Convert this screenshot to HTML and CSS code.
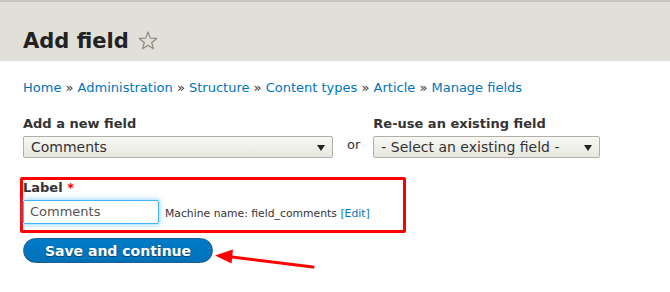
FILE: index.html
```html
<!DOCTYPE html>
<html>
<head>
<meta charset="utf-8">
<link rel="stylesheet" href="styles.css">
</head>
<body>
<header class="page-header">
  <h1 class="title">Add field <svg class="star" viewBox="0 0 20 20" width="20" height="20"><polygon points="10,1 12.29,7.14 18.84,7.43 13.71,11.51 15.47,17.82 10,14.2 4.53,17.82 6.29,11.51 1.16,7.43 7.71,7.14" fill="none" stroke="#8d8b80" stroke-width="1.2" stroke-linejoin="round"/></svg></h1>
</header>
<nav class="breadcrumb"><a>Home</a> » <a>Administration</a> » <a>Structure</a> » <a>Content types</a> » <a>Article</a> » <a>Manage fields</a></nav>
<form class="form">
  <div class="row">
    <div class="col">
      <div class="lbl">Add a new field</div>
      <div class="select sel-new"><span>Comments</span><i class="caret"></i></div>
    </div>
    <div class="or">or</div>
    <div class="col">
      <div class="lbl">Re-use an existing field</div>
      <div class="select sel-existing"><span>- Select an existing field -</span><i class="caret"></i></div>
    </div>
  </div>
  <div class="label-field">
    <div class="lbl lbl-tight">Label <span class="req">*</span></div>
    <div class="input-row">
      <div class="input">Comments</div>
      <span class="machine">Machine name: field_comments <span class="edit">[Edit]</span></span>
    </div>
  </div>
  <button type="button" class="btn">Save and continue</button>
</form>
<svg class="annot-arrow" width="670" height="292" viewBox="0 0 670 292">
  <line x1="313" y1="267" x2="228" y2="256.5" stroke="#f00" stroke-width="3" stroke-linecap="round"/>
  <polygon points="215,255.5 233,249.5 231.5,263.5" fill="#f00"/>
</svg>
</body>
</html>
```
FILE: styles.css
```css
html, body {
  margin: 0;
  padding: 0;
  background: #fff;
}
body {
  font-family: "DejaVu Sans", Verdana, sans-serif;
  color: #333;
  width: 670px;
  height: 292px;
  overflow: hidden;
  position: relative;
}
.page-header {
  background: #e0e0d8;
  border-top: 2px solid #c6c5be;
  height: 59px;
  padding-left: 23px;
  box-sizing: content-box;
}
.title {
  margin: 0;
  padding-top: 26px;
  font-size: 21px;
  line-height: 26px;
  font-weight: bold;
  color: #222;
  display: flex;
  align-items: center;
  gap: 9px;
}
.star {
  display: block;
  margin-top: -1px;
}
.breadcrumb {
  margin: 18px 0 0 23px;
  font-size: 13px;
  line-height: 18px;
  color: #333;
}
.breadcrumb a {
  color: #0074bd;
}
.form {
  margin: 18px 0 0 0;
}
.row {
  display: flex;
  align-items: flex-start;
  padding-left: 23px;
}
.lbl {
  font-size: 13px;
  font-weight: bold;
  line-height: 18px;
  color: #333;
}
.lbl-tight {
  line-height: 16px;
}
.select {
  margin-top: 3px;
  height: 22px;
  box-sizing: border-box;
  border: 1px solid #b0afa8;
  border-radius: 2px;
  background: linear-gradient(#f7f7f4, #e8e8e1);
  display: flex;
  align-items: center;
  justify-content: space-between;
  padding: 0 7px 0 7px;
  font-size: 14px;
  color: #333;
}
.sel-new {
  width: 310px;
}
.sel-existing {
  width: 227px;
  padding-left: 7px;
}
.caret {
  width: 0;
  height: 0;
  border-left: 4.5px solid transparent;
  border-right: 4.5px solid transparent;
  border-top: 6px solid #222;
  margin-top: 1px;
}
.or {
  font-size: 13px;
  line-height: 18px;
  margin: 21px 13px 0 14px;
}
.label-field {
  margin: 19px 0 0 20px;
  width: 380px;
  border: 3px solid #f00;
  border-radius: 2px;
  padding: 0 0 6px 0;
}
.req {
  color: #e00;
}
.input-row {
  display: flex;
  align-items: center;
  margin-top: 4px;
}
.input {
  width: 136px;
  height: 24px;
  box-sizing: border-box;
  border: 1px solid #40b6ff;
  border-radius: 2px;
  box-shadow: 0 0 5px 1px rgba(64, 182, 255, 0.5);
  font-size: 13px;
  line-height: 22px;
  padding-left: 6px;
  color: #555;
}
.machine {
  margin-left: 6px;
  font-size: 10.8px;
  color: #333;
  padding-top: 2px;
}
.edit {
  color: #0074bd;
}
.btn {
  margin: 5px 0 0 23px;
  width: 190px;
  height: 25px;
  box-sizing: border-box;
  border: 1px solid #1e5c90;
  border-radius: 13px;
  background: linear-gradient(#007bc6, #0071b8);
  color: #fff;
  font-family: "DejaVu Sans", Verdana, sans-serif;
  font-weight: bold;
  font-size: 14px;
  line-height: 20px;
  padding: 0;
  text-shadow: 0 1px 1px rgba(0, 0, 0, 0.4);
  display: block;
}
.annot-arrow {
  position: absolute;
  left: 0;
  top: 0;
  pointer-events: none;
}
```
